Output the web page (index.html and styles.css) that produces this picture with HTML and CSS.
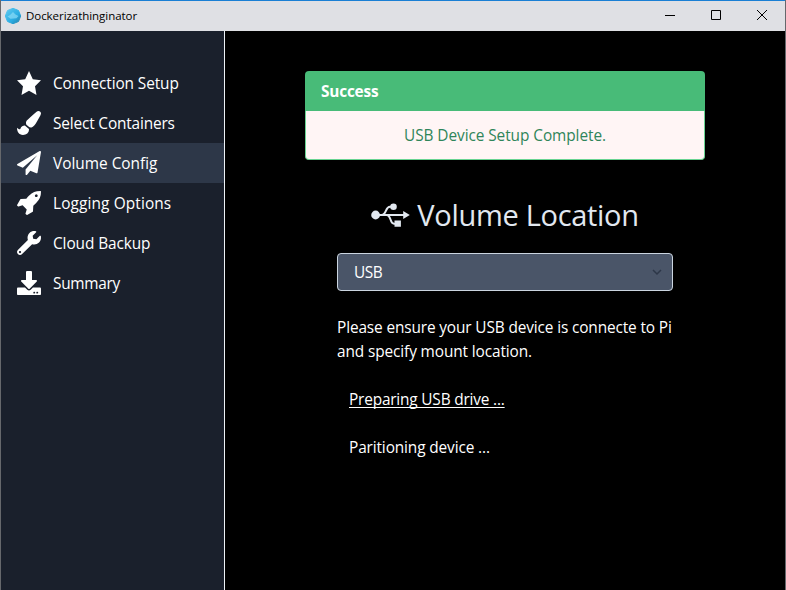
FILE: index.html
```html
<!DOCTYPE html>
<html lang="en">
<head>
<meta charset="utf-8">
<title>Dockerizathinginator</title>
<link rel="stylesheet" href="styles.css">
</head>
<body>
<div class="window">
  <header class="titlebar">
    <svg class="logo" viewBox="0 0 16 16"><defs><linearGradient id="sea" x1="0" y1="0" x2="1" y2="1"><stop offset="0" stop-color="#62cbf0"/><stop offset=".6" stop-color="#2bade3"/><stop offset="1" stop-color="#247fa8"/></linearGradient></defs><path d="M8 .3 13.500 2.500 15.700 8 13.500 13.500 8 15.700 2.500 13.500.3 8 2.500 2.500z" fill="url(#sea)" stroke="url(#sea)" stroke-linejoin="round"/><path d="M2.500 8.500 5 7l3-3 2.500 2.500L13.500 8l-2 2.200-6 .6z" fill="#8bdcf6" opacity=".7"/></svg>
    <span class="app-name">Dockerizathinginator</span>
    <div class="controls">
      <svg viewBox="0 0 46 30"><path d="M15 14.500h10" /></svg>
      <svg viewBox="0 0 46 30"><path d="M15.500 9.500h9v9h-9z" /></svg>
      <svg viewBox="0 0 46 30"><path class="close" d="m15 9 10 10M25 9 15 19" /></svg>
    </div>
  </header>
  <div class="content">
    <nav class="sidebar">
      <a class="item"><svg viewBox="0 0 24 24"><path d="M12 0l3.800 8.200 8.200 1.100-6 5.900L19.500 24 12 19.800 4.500 24 6 15.200 0 9.300l8.200-1.100z"/></svg><span class="t1">Connection Setup</span></a>
      <a class="item"><svg viewBox="0 0 512 512"><path d="M167.020 309.340c-40.120 2.580-76.530 17.860-97.190 72.300-2.350 6.210-8 9.980-14.590 9.980-11.110 0-45.460-27.670-55.250-34.350C0 439.620 37.930 512 128 512c75.860 0 128-43.770 128-120.190 0-3.110-.65-6.080-.97-9.130l-88.010-73.340zM457.890 0c-15.160 0-29.370 6.710-40.210 16.450C213.270 199.050 192 203.340 192 257.090c0 13.700 3.250 26.760 8.730 38.700l63.820 53.180c7.210 1.800 14.640 3.030 22.390 3.030 62.110 0 98.110-45.470 211.160-256.460 7.380-14.350 13.900-29.850 13.900-45.990C512 20.640 486 0 457.890 0z"/></svg><span class="t2">Select Containers</span></a>
      <a class="item active"><svg viewBox="0 0 1792 1792"><path d="M1764 11q33 24 27 64l-256 1536q-5 29-32 45-14 8-31 8-11 0-24-5l-453-185-242 295q-18 23-49 23-13 0-22-4-19-7-30.500-23.500t-11.500-36.500v-349l864-1059-1069 925-395-162q-37-14-40-55-2-40 32-59l1664-960q15-9 32-9 20 0 36 11z"/></svg><span class="t3">Volume Config</span></a>
      <a class="item"><svg viewBox="32 128 1632 1632"><path d="M1440 448q0-40-28-68t-68-28-68 28-28 68 28 68 68 28 68-28 28-68zm224-288q0 249-75.500 430.500t-253.500 360.500q-81 80-195 176l-20 379q-2 16-16 26l-384 224q-7 4-16 4-12 0-23-9l-64-64q-13-14-8-32l85-276-281-281-276 85q-3 1-9 1-14 0-23-9l-64-64q-17-19-5-39l224-384q10-14 26-16l379-20q96-114 176-195 188-187 358-258t431-71q14 0 24 9.500t10 22.500z"/></svg><span class="t4">Logging Options</span></a>
      <a class="item"><svg viewBox="0 0 512 512"><path d="M507.730 109.100c-2.240-9.030-13.540-12.090-20.120-5.510l-74.360 74.360-67.880-11.310-11.310-67.880 74.360-74.360c6.620-6.620 3.430-17.900-5.660-20.160-47.380-11.740-99.550.91-136.580 37.930-39.640 39.640-50.550 97.100-34.050 147.200L18.740 402.760c-24.990 24.990-24.990 65.510 0 90.500 24.990 24.990 65.510 24.990 90.500 0l213.210-213.210c50.120 16.710 107.470 5.680 147.370-34.220 37.070-37.070 49.700-89.320 37.910-136.730zM64 472c-13.250 0-24-10.750-24-24 0-13.260 10.750-24 24-24s24 10.740 24 24c0 13.250-10.750 24-24 24z"/></svg><span class="t5">Cloud Backup</span></a>
      <a class="item"><svg viewBox="0 0 512 512"><path d="M216 0h80c13.300 0 24 10.700 24 24v168h87.700c17.800 0 26.700 21.500 14.100 34.100L269.700 378.300c-7.500 7.500-19.800 7.500-27.300 0L90.100 226.100c-12.600-12.600-3.700-34.100 14.100-34.100H192V24c0-13.300 10.700-24 24-24zm296 376v112c0 13.300-10.700 24-24 24H24c-13.300 0-24-10.700-24-24V376c0-13.300 10.700-24 24-24h146.700l49 49c20.100 20.100 52.500 20.100 72.600 0l49-49H488c13.300 0 24 10.700 24 24zm-124 88c0-11-9-20-20-20s-20 9-20 20 9 20 20 20 20-9 20-20zm64 0c0-11-9-20-20-20s-20 9-20 20 9 20 20 20 20-9 20-20z"/></svg><span class="t6">Summary</span></a>
    </nav>
    <main class="main">
      <section class="alert">
        <div class="alert-title"><span>Success</span></div>
        <div class="alert-body"><span>USB Device Setup Complete.</span></div>
      </section>
      <h1 class="heading">
        <svg viewBox="0 0 39 26"><circle cx="4.600" cy="13" r="4.400"/><circle cx="22.500" cy="4.700" r="3.300"/><path d="M23.500 18.600h6.400v6.200h-6.400zM32.200 9l6.600 4-6.600 4z"/><path class="wire" d="M4 13h30M10.500 13c5.500 0 3.500-8.300 8.500-8.300h3M15.500 13c5 0 3 8.800 7.500 8.800h3"/></svg>
        <span>Volume Location</span>
      </h1>
      <div class="form">
        <div class="select"><span>USB</span><svg viewBox="0 0 16 16"><path d="m4 6 4 4 4-4"/></svg></div>
        <p class="hint"><span class="h1">Please ensure your USB device is connecte to Pi</span><br><span class="h2">and specify mount location.</span></p>
        <p class="step"><span class="s1">Preparing USB drive ...</span></p>
        <p class="step"><span class="s2">Paritioning device ...</span></p>
      </div>
    </main>
  </div>
</div>
</body>
</html>
```
FILE: styles.css
```css
* { box-sizing: border-box; }
body { margin: 0; background: #000; font: 15.4px/24px "Open Sans", "Noto Sans", sans-serif; color: #fff; }
p, h1 { margin: 0; }
span { white-space: nowrap; }
.window { height: 590px; display: flex; flex-direction: column; border: 1px solid #66686c; border-width: 0 1px; overflow: hidden; }
.titlebar { height: 31px; flex: none; display: flex; align-items: center; background: #dfe0e4; border-top: 1px solid #1a7fd4; color: #000; padding-left: 4px; }
.logo { width: 16px; height: 16px; }
.app-name { font-size: 11.5px; margin-left: 5px; letter-spacing: -.05px; }
.controls { display: flex; margin-left: auto; margin-right: -3px; }
.controls svg { width: 46px; height: 30px; fill: none; stroke: #000; stroke-width: 1; }
.content { flex: 1; display: flex; }
.sidebar { width: 224px; background: #1a202c; border-right: 1px solid #edf2f7; padding-top: 32px; }
.item { display: flex; align-items: center; height: 40px; padding-left: 16px; gap: 12px; }
.item svg { width: 24px; height: 24px; fill: #fff; }
.item span { padding-top: 2px; }
.active { background: #2d3748; }
.t1 { letter-spacing: -.1px; }
.t2 { letter-spacing: -.16px; }
.t4 { letter-spacing: .12px; }
.t5 { letter-spacing: -.09px; }
.t6 { letter-spacing: -.3px; }
.main { flex: 1; display: flex; flex-direction: column; align-items: center; padding-top: 40px; }
.alert { width: 400px; }
.alert-title { height: 40px; padding: 9px 16px 0; background: #48bb78; border-radius: 4px 4px 0 0; font-weight: 700; letter-spacing: -.2px; }
.alert-body { height: 49px; padding: 13px 16px 0; text-align: center; background: #fff5f5; color: #2f855a; border: 1px solid #68d391; border-top: 0; border-radius: 0 0 4px 4px; letter-spacing: -.07px; }
.heading { display: flex; align-items: center; height: 45px; margin-top: 32px; gap: 7px; font-size: 29px; font-weight: 400; color: #e2e8f0; letter-spacing: -.3px; }
.heading svg { width: 39px; height: 26px; fill: #e2e8f0; }
.heading .wire { fill: none; stroke: #e2e8f0; stroke-width: 2; }
.form { width: 336px; }
.select { display: flex; align-items: center; justify-content: space-between; height: 38px; margin-top: 16px; padding: 0 7px 0 16px; background: #4a5568; border: 1px solid #cbd5e0; border-radius: 4px; }
.select span { padding-top: 2px; letter-spacing: -.4px; }
.select svg { width: 16px; height: 16px; fill: none; stroke: #2d3748; stroke-width: 1.500; }
.hint { margin-top: 25px; }
.h1 { letter-spacing: -.13px; }
.h2 { letter-spacing: -.11px; }
.step { margin: 24px 0 0 12px; }
.s1 { letter-spacing: -.18px; text-decoration: underline; text-underline-offset: 2px; text-decoration-skip-ink: none; }
.s2 { letter-spacing: -.12px; }
```
